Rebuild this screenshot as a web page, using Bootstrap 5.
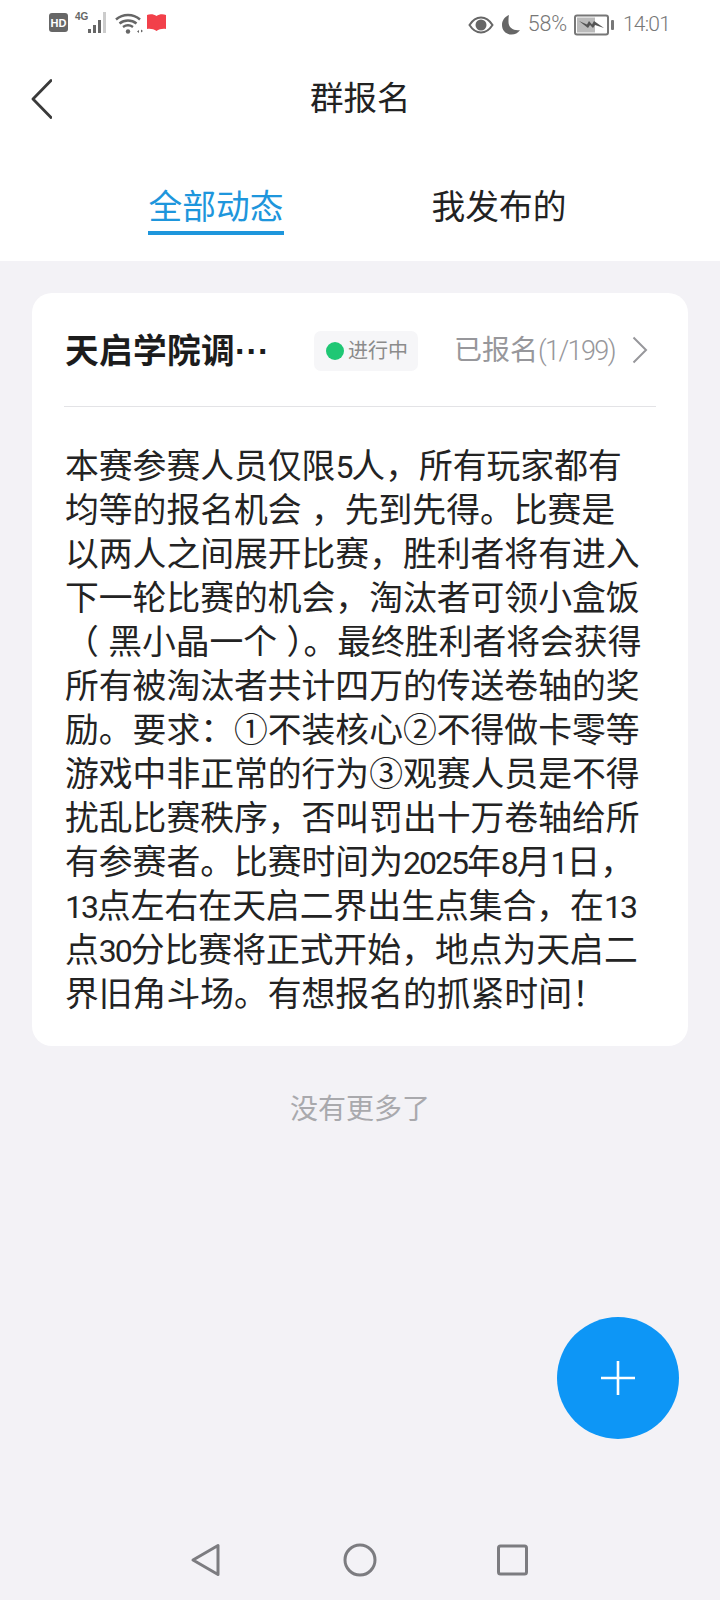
<!DOCTYPE html>
<html lang="zh-CN">
<head>
  <meta charset="UTF-8">
  <meta name="viewport" content="width=device-width, initial-scale=1.0">
  <title>群报名</title>
  <link href="https://cdn.jsdelivr.net/npm/bootstrap@5.3.0/dist/css/bootstrap.min.css" rel="stylesheet">
  <style>
    body {
      width: 720px;
      height: 1600px;
      overflow: hidden;
      background-color: #f3f2f6;
      font-family: "Liberation Sans", "Noto Sans CJK SC", sans-serif;
      color: #222;
    }
    .page-wrap { height: 1600px; position: relative; }
    .top-area { height: 261px; background: #fff; }
    .status-row { height: 46px; padding: 0 50px 0 49px; color: #777; font-size: 20px; }
    .status-row svg { display: block; }
    .status-right { margin-top: 3px; gap: 7px; }
    .thin-num { font-family: Roboto, sans-serif; font-weight: 300; }
    .status-pct { font-size: 21.500px; letter-spacing: -0.2px; }
    .status-time { font-size: 21px; letter-spacing: -0.8px; margin-left: 2px; }
    .title-row { height: 106px; padding-left: 31px; }
    .title-text { font-size: 33.500px; line-height: 44px; margin-left: 258px; }
    .tabs-row { padding-top: 33px; gap: 147px; padding-left: 148px; }
    .tab-item { width: 136px; font-size: 33.700px; line-height: 44px; text-align: center; padding-bottom: 2px; border-bottom: 4px solid transparent; }
    .tab-active { color: #1e96dc; border-bottom-color: #1e96dc; }
    .sign-card { margin: 32px 32px 0; height: 753px; background: #fff; border-radius: 20px; padding: 0 32px; }
    .sign-head { height: 114px; border-bottom: 1px solid #e3e3e6; }
    .sign-name { width: 250px; padding-left: 1px; padding-top: 3px; font-size: 33.700px; font-weight: 700; color: #1c1c1c; line-height: 44px; letter-spacing: 0.3px; white-space: nowrap; }
    .state-pill { width: 104px; height: 40px; margin-top: 2px; background: #f6f6f8; border-radius: 7px; color: #8b8b8b; font-size: 20px; padding-left: 12px; gap: 4px; }
    .state-dot { width: 18px; height: 18px; border-radius: 50%; background: #1fc774; }
    .sign-count { font-size: 28px; color: #97979b; margin-left: 36px; padding-top: 3px; }
    .sign-count .thin-num { font-size: 27px; letter-spacing: -1.600px; }
    .count-arrow { margin-left: 17px; }
    .sign-text { margin-top: 37px; padding-left: 1px; font-size: 33.800px; line-height: 44px; color: #232323; white-space: nowrap; }
    .sign-text .thin-num { font-size: 32px; font-weight: 400; letter-spacing: -2px; line-height: 1; }
    .no-more { margin-top: 44px; text-align: center; font-size: 28px; line-height: 40px; color: #a9a9ad; }
    .add-btn { position: absolute; left: 557px; top: 1317px; width: 122px; height: 122px; border-radius: 50%; background: #0d96f6; border: 0; padding: 0; }
    .nav-row { position: absolute; left: 0; bottom: 0; width: 100%; height: 80px; }
  </style>
</head>
<body>
  <div class="page-wrap d-flex flex-column">
    <div class="top-area">
      <div class="status-row d-flex align-items-center">
        <svg width="122" height="24" viewBox="0 0 122 24">
          <rect x="0" y="2" width="19" height="19" rx="3" fill="#666"/>
          <text x="9.500" y="16" font-size="11" font-weight="700" text-anchor="middle" fill="#fff" font-family="Liberation Sans">HD</text>
          <text x="26" y="9" font-size="10" font-weight="700" fill="#666" font-family="Liberation Sans">4G</text>
          <rect x="39" y="18" width="3" height="4" fill="#666"/>
          <rect x="44" y="14" width="3" height="8" fill="#666"/>
          <rect x="49" y="9" width="3" height="13" fill="#666"/>
          <rect x="54" y="1" width="3" height="21" fill="#ccc"/>
          <path d="M67 8.500c7-6 17-6 24 0M70.500 12.500c5-4 12-4 17 0M74 16c3-2 7-2 10 0" fill="none" stroke="#666" stroke-width="2.500"/>
          <circle cx="79" cy="20.500" r="2.200" fill="#666"/>
          <path d="M90 19l-2 1.500 2 1.500zM92 18.500l2 1.500-2 1.500z" fill="#666"/>
          <path d="M98 4c3-1.500 7-1 9.500 1 2.500-2 6.500-2.500 9.500-1v14c-3-.5-7 0-9.500 2-2.500-2-6.500-2.500-9.500-2z" fill="#f2404a"/>
        </svg>
        <div class="ms-auto d-flex align-items-center status-right">
          <svg width="26" height="18" viewBox="0 0 26 18">
            <path d="M1.500 9C5 3.500 9 1.500 13 1.500S21 3.500 24.500 9C21 14.500 17 16.500 13 16.500S5 14.500 1.500 9z" fill="none" stroke="#666" stroke-width="2"/>
            <circle cx="13" cy="9" r="5.500" fill="#666"/>
          </svg>
          <svg width="20" height="22" viewBox="0 0 20 22">
            <path d="M8 1C3.500 3 1 6.500 1 11c0 5.500 4 9.500 9.500 9.500 3.500 0 6.500-1.500 8.500-4.500-6 1-11.500-2-11.500-8C7.500 5.500 7.500 3 8 1z" fill="#666"/>
          </svg>
          <span class="thin-num status-pct">58%</span>
          <svg width="40" height="22" viewBox="0 0 40 22">
            <rect x="1" y="1.500" width="33" height="19" rx="2" fill="#fff" stroke="#777" stroke-width="2"/>
            <rect x="3" y="3.500" width="18" height="15" fill="#bbb"/>
            <path d="M5 7l8 3.500 2-3.500 3 3.500 2-3.500 10 7-9-3-2 3-3-3-2 3z" fill="#555"/>
            <rect x="37" y="6" width="3" height="10" rx="1" fill="#777"/>
          </svg>
          <span class="thin-num status-time">14:01</span>
        </div>
      </div>
      <div class="title-row d-flex align-items-center">
        <svg width="21" height="40" viewBox="0 0 21 40" class="d-block">
          <path d="M20 1.500L2 20l18 18.500" fill="none" stroke="#3a3a3a" stroke-width="2.800" stroke-linecap="round" stroke-linejoin="round"/>
        </svg>
        <div class="title-text">群报名</div>
      </div>
      <div class="tabs-row d-flex">
        <div class="tab-item tab-active">全部动态</div>
        <div class="tab-item">我发布的</div>
      </div>
    </div>

    <div class="sign-card">
      <div class="sign-head d-flex align-items-center">
        <div class="sign-name">天启学院调···</div>
        <div class="state-pill d-flex align-items-center">
          <span class="state-dot"></span>
          <span>进行中</span>
        </div>
        <div class="sign-count">已报名<span class="thin-num">(1/199)</span></div>
        <svg width="16" height="28" viewBox="0 0 16 28" class="count-arrow">
          <path d="M1.500 1.500L14 14 1.500 26.500" fill="none" stroke="#97979b" stroke-width="2"/>
        </svg>
      </div>
      <div class="sign-text">本赛参赛人员仅限<span class="thin-num">5</span>人，所有玩家都有<br>均等的报名机会 ，先到先得。比赛是<br>以两人之间展开比赛，胜利者将有进入<br>下一轮比赛的机会，淘汰者可领小盒饭<br>（ 黑小晶一个 ）。最终胜利者将会获得<br>所有被淘汰者共计四万的传送卷轴的奖<br>励。要求：①不装核心②不得做卡零等<br>游戏中非正常的行为③观赛人员是不得<br>扰乱比赛秩序，否叫罚出十万卷轴给所<br>有参赛者。比赛时间为<span class="thin-num">2025</span>年<span class="thin-num">8</span>月<span class="thin-num">1</span>日，<br><span class="thin-num">13</span>点左右在天启二界出生点集合，在<span class="thin-num">13</span><br>点<span class="thin-num">30</span>分比赛将正式开始，地点为天启二<br>界旧角斗场。有想报名的抓紧时间！</div>
    </div>

    <div class="no-more">没有更多了</div>

    <button class="add-btn d-flex align-items-center justify-content-center" type="button" aria-label="add">
      <svg width="34" height="34" viewBox="0 0 34 34">
        <path d="M17 0v34M0 17h34" stroke="#fff" stroke-width="2.600"/>
      </svg>
    </button>

    <div class="nav-row">
      <svg width="720" height="80" viewBox="0 0 720 80" class="d-block">
        <path d="M218 25.500v29L193 40z" fill="none" stroke="#7c7c80" stroke-width="3" stroke-linejoin="round"/>
        <circle cx="360" cy="40" r="15" fill="none" stroke="#7c7c80" stroke-width="3"/>
        <rect x="498.500" y="26" width="28" height="28" rx="2" fill="none" stroke="#7c7c80" stroke-width="3"/>
      </svg>
    </div>
  </div>

  <script src="https://cdn.jsdelivr.net/npm/bootstrap@5.3.0/dist/js/bootstrap.bundle.min.js"></script>
</body>
</html>
